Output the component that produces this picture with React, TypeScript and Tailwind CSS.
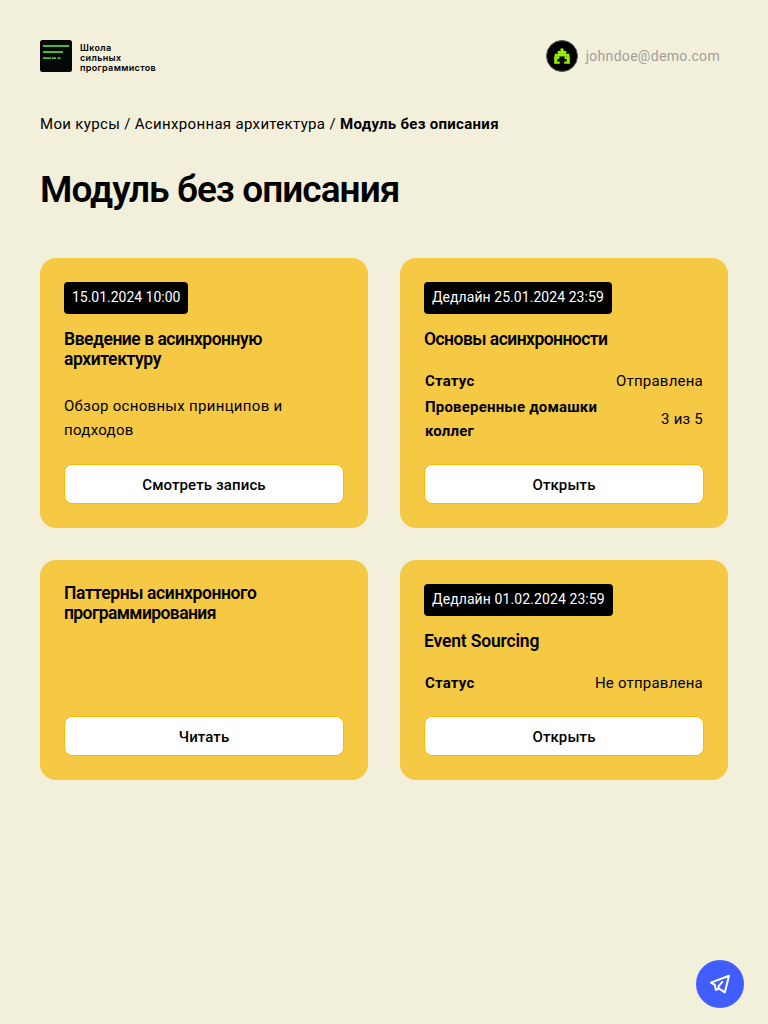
import React from "react";

function Logo() {
  return (
    <a className="flex items-center gap-2">
      <svg width="32" height="32" viewBox="0 0 32 32">
        <rect width="32" height="32" rx="2.5" fill="#050807" />
        <g fill="#4db83c">
          <rect x="3" y="5" width="26" height="2" />
          <rect x="3" y="11" width="20" height="2" />
          <rect x="3" y="17.2" width="8" height="1.8" />
          <rect x="12" y="17.2" width="4" height="1.8" />
          <rect x="17.5" y="17.2" width="3" height="1.8" />
        </g>
      </svg>
      <span className="pt-[3px] font-['Inter',sans-serif] text-[9px] leading-[10px] font-semibold tracking-[0.35px] whitespace-nowrap">
        <span className="block">Школа</span>
        <span className="block">сильных</span>
        <span className="block">программистов</span>
      </span>
    </a>
  );
}

function Avatar() {
  return (
    <svg width="32" height="32" viewBox="0 0 32 32" className="shrink-0">
      <circle cx="16" cy="16" r="15.5" fill="#000" stroke="#5b5b58" />
      <path
        fill="#9bfa00"
        d="M14.4 8.4h3.2v2.6h-3.2zM11.7 11h8.6v2.7h-8.6zM8.7 13.7h14.6v2.7H8.7zM8.2 16.4h5.2v2.6H8.2zM18.6 16.4h5.2v2.6h-5.2zM8.2 19h3.2v2.4H8.2zM20.6 19h3.2v2.4h-3.2zM8.2 21.4h5.6v2.4H8.2zM18.2 21.4h5.6v2.4h-5.6z"
      />
      <path d="M11.5 8v16M14.2 8v16M17.8 8v16M20.5 8v16M8 13.7h16M8 16.4h16M8 19h16M8 21.4h16" stroke="#000" strokeOpacity=".3" strokeWidth=".4" />
    </svg>
  );
}

type Row = { label: string; value: string };
type CardProps = { badge?: string; badgeClass?: string; title: React.ReactNode; text?: string; rows?: Row[]; action: string };

function Card({ badge, badgeClass = "tracking-[0.06px]", title, text, rows, action }: CardProps) {
  return (
    <article className="flex flex-col rounded-2xl bg-[#f6c944] p-6">
      {badge && (
        <div className={`mb-[15px] flex h-8 shrink-0 items-center self-start rounded-[4px] bg-black px-2 pb-0.5 text-[14px] text-white ${badgeClass}`}>
          {badge}
        </div>
      )}
      <h2 className={`text-[17.5px] leading-5 font-semibold ${badge ? "" : "-mt-px"}`}>{title}</h2>
      {text && <p className="mt-[25px] text-[15px] leading-6 tracking-[0.3px]">{text}</p>}
      {rows && (
        <table className="mt-[18px] w-full border-separate border-spacing-x-px border-spacing-y-0.5">
          <tbody>
            {rows.map((r) => (
              <tr key={r.label} className="text-[15px] leading-6">
                <th className="p-0 text-left font-bold tracking-[0.19px]">{r.label}</th>
                <td className="p-0 pl-4 text-right tracking-[0.22px] whitespace-nowrap">{r.value}</td>
              </tr>
            ))}
          </tbody>
        </table>
      )}
      <div className="mt-auto">
        <button className="block h-10 w-full rounded-lg border border-[#ffb800] bg-white pt-0.5 text-[15px] font-medium tracking-[0.12px]">
          {action}
        </button>
      </div>
    </article>
  );
}

export default function App() {
  return (
    <div className="relative min-h-screen bg-[#f2efdb] px-10 pt-10 font-['Roboto','Liberation_Sans',sans-serif] text-black">
      <header className="flex h-8 items-center justify-between pr-2">
        <Logo />
        <div className="flex items-center gap-2">
          <Avatar />
          <span className="text-[14px] tracking-[0.3px] text-[#a09f98]">johndoe@demo.com</span>
        </div>
      </header>
      <nav className="mt-10 text-[15px] leading-6 tracking-[0.33px] whitespace-nowrap">
        Мои курсы / Асинхронная архитектура / <b className="font-bold tracking-[0.3px]">Модуль без описания</b>
      </nav>
      <h1 className="mt-8 text-[37px] leading-[44px] font-semibold tracking-[-0.95px]">Модуль без описания</h1>
      <main className="mt-[46px] grid grid-cols-2 grid-rows-[270px_220px] gap-8">
        <Card
          badge="15.01.2024 10:00"
          badgeClass="tracking-[-0.02px]"
          title={
            <>
              <span className="tracking-[-0.48px]">Введение в асинхронную </span>
              <span className="tracking-[-0.4px]">архитектуру</span>
            </>
          }
          text="Обзор основных принципов и подходов"
          action="Смотреть запись"
        />
        <Card
          badge="Дедлайн 25.01.2024 23:59"
          title={<span className="tracking-[-0.54px]">Основы асинхронности</span>}
          rows={[
            { label: "Статус", value: "Отправлена" },
            { label: "Проверенные домашки коллег", value: "3 из 5" },
          ]}
          action="Открыть"
        />
        <Card
          title={
            <>
              <span className="tracking-[-0.38px]">Паттерны асинхронного </span>
              <span className="tracking-[-0.6px]">программирования</span>
            </>
          }
          action="Читать"
        />
        <Card
          badge="Дедлайн 01.02.2024 23:59"
          badgeClass="tracking-[0.1px]"
          title={<span className="tracking-[-0.17px]">Event Sourcing</span>}
          rows={[{ label: "Статус", value: "Не отправлена" }]}
          action="Открыть"
        />
      </main>
      <button className="fixed right-6 bottom-4 flex size-12 items-center justify-center rounded-full bg-[#405eff]">
        <svg width="24" height="24" viewBox="0 0 24 24" fill="none" stroke="#fff" strokeWidth="2" strokeLinejoin="round" strokeLinecap="round">
          <path d="M21 3.7 3 10.6l3.8 2.3 1.2 5.2 2.6-1.8 6.2 4.1zM10.6 16.3v-2.2l3.8-4.2" />
        </svg>
      </button>
    </div>
  );
}
